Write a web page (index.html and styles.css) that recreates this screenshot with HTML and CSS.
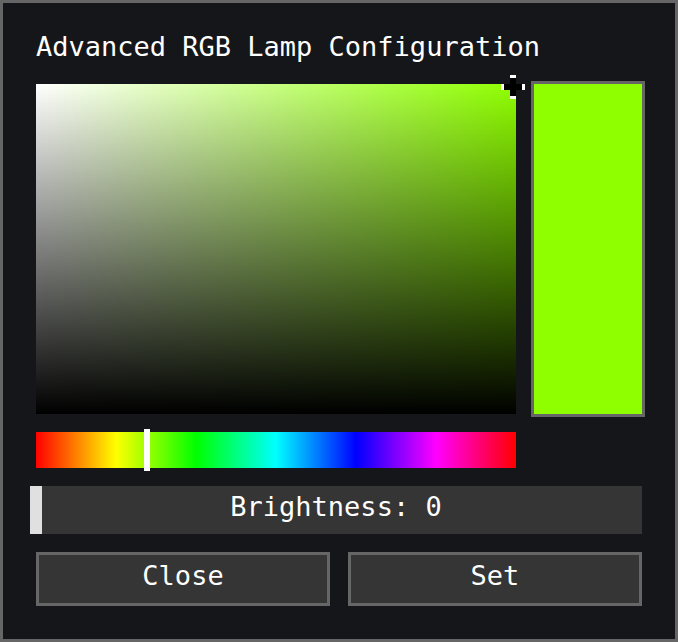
FILE: index.html
```html
<!DOCTYPE html>
<html>
<head>
<meta name="viewport" content="width=device-width, initial-scale=1.0" />
<link rel="stylesheet" href="styles.css">
</head>
<body>
<div class="panel">
	<h1 class="title">Advanced RGB Lamp Configuration</h1>
	<div class="picker">
		<div class="left">
			<div class="field">
				<svg class="cursor" width="24" height="24" viewBox="0 0 24 24">
					<rect x="9" y="0" width="6" height="24" fill="#000"/>
					<rect x="0" y="9" width="24" height="6" fill="#000"/>
					<rect x="9" y="0" width="6" height="3" fill="#fff"/>
					<rect x="9" y="21" width="6" height="3" fill="#fff"/>
					<rect x="0" y="9" width="3" height="6" fill="#fff"/>
					<rect x="21" y="9" width="3" height="6" fill="#fff"/>
				</svg>
			</div>
			<div class="hue">
				<div class="hue-knob"></div>
			</div>
		</div>
		<div class="swatch"></div>
	</div>
	<div class="bright">
		<div class="bright-knob"></div>
		<span class="bright-label">Brightness: 0</span>
	</div>
	<div class="buttons">
		<button class="btn" type="button">Close</button>
		<button class="btn" type="button">Set</button>
	</div>
</div>
</body>
</html>
```

FILE: styles.css
```css
html, body {margin:0px; padding:0px; background:#151619;}

.panel{
	width: 678px;
	height: 642px;
	box-sizing: border-box;
	border: 3px solid #666666;
	background: #151619;
	padding: 30px 30px 0 33px;
	font-family: "DejaVu Sans Mono", "Liberation Mono", monospace;
	color: #ffffff;
}

.title{
	margin: 0;
	font-size: 27px;
	font-weight: normal;
	line-height: 27px;
	white-space: nowrap;
}

.picker{
	display: flex;
	gap: 15px;
	margin-top: 21px;
}
.left{
	width: 480px;
	padding-top: 3px;
}
.field{
	position: relative;
	height: 330px;
	background:
		linear-gradient(to top, #000000, rgba(0,0,0,0)),
		linear-gradient(to right, #ffffff, #8fff00);
}
.cursor{
	position: absolute;
	left: 465px;
	top: -9px;
}
.hue{
	position: relative;
	height: 36px;
	margin-top: 18px;
	background: linear-gradient(to right, #ff0000, #ffff00, #00ff00, #00ffff, #0000ff, #ff00ff, #ff0000);
}
.hue-knob{
	position: absolute;
	left: 108px;
	top: -3px;
	width: 6px;
	height: 42px;
	background: #ffffff;
}
.swatch{
	width: 114px;
	height: 336px;
	box-sizing: border-box;
	border: 3px solid #666666;
	background: #8fff00;
}

.bright{
	display: flex;
	height: 48px;
	width: 612px;
	margin: 18px 0 0 -6px;
	background: #353535;
}
.bright-knob{
	width: 12px;
	background: #e0e0e0;
}
.bright-label{
	flex: 1;
	margin-right: 12px;
	text-align: center;
	font-size: 27px;
	line-height: 42px;
	white-space: nowrap;
}

.buttons{
	display: flex;
	gap: 18px;
	margin-top: 18px;
	width: 606px;
}
.btn{
	flex: 1;
	height: 54px;
	border: 3px solid #666666;
	background: #353535;
	color: #ffffff;
	font-family: "DejaVu Sans Mono", "Liberation Mono", monospace;
	font-size: 27px;
	line-height: 40px;
	padding: 0 0 6px 0;
	cursor: pointer;
}
```
